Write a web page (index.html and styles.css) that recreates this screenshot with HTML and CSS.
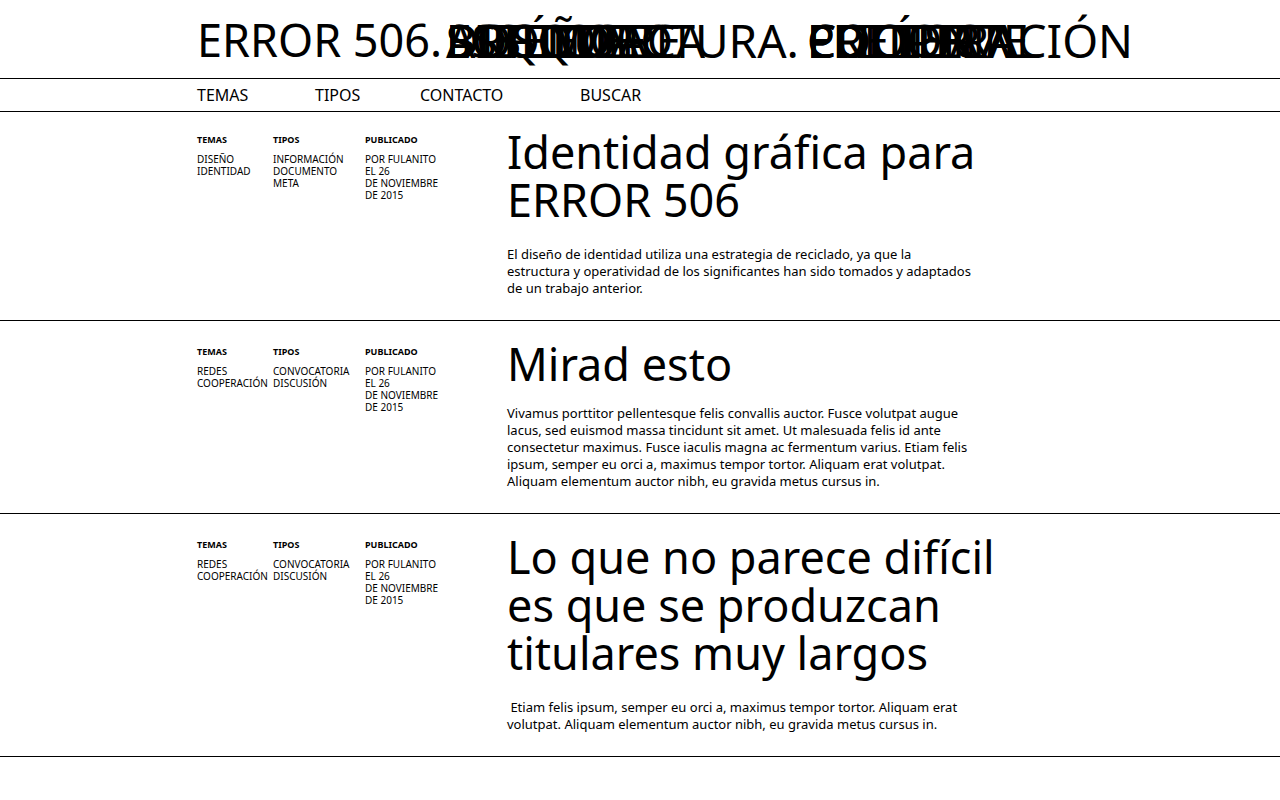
FILE: index.html
```html
<!DOCTYPE html>
<html lang="es">
<head>
<meta charset="utf-8">
<title>ERROR 506</title>
<meta name="viewport" content="width=device-width, initial-scale=1">
<link rel="stylesheet" href="styles.css">
</head>
<body>
<header class="masthead">
  <div class="wrap brand">
    <span class="brand-name">ERROR 506.</span>
    <span class="stack"><span>ARQUITECTURA.</span><span>DISEÑO</span><span>ESTÉTICA</span><span>BOSQUE</span><span>SOFTWARE</span><span>BIBLIOTECA</span><span>SOCIEDAD</span></span>
    <span class="stack"><span>COOPERACIÓN</span><span>POLÍTICA</span><span>EFICIENTE</span><span>CULTURA</span><span>EDITORIAL</span><span>PRENSA</span></span>
  </div>
</header>
<nav class="menu">
  <div class="wrap menu-items">
    <a href="#temas">TEMAS</a>
    <a href="#tipos">TIPOS</a>
    <a href="#contacto">CONTACTO</a>
    <a href="#buscar">BUSCAR</a>
  </div>
</nav>
<main>
  <article class="entry entry-first">
    <div class="wrap entry-grid">
      <div class="meta">
        <div><h2>TEMAS</h2><p>DISEÑO<br>IDENTIDAD</p></div>
        <div><h2>TIPOS</h2><p>INFORMACIÓN<br>DOCUMENTO<br>META</p></div>
        <div><h2>PUBLICADO</h2><p>POR FULANITO<br>EL 26<br>DE NOVIEMBRE<br>DE 2015</p></div>
      </div>
      <div class="content">
        <h1>Identidad gráfica para<br>ERROR 506</h1>
        <p>El diseño de identidad utiliza una estrategia de reciclado, ya que la<br>estructura y operatividad de los significantes han sido tomados y adaptados<br>de un trabajo anterior.</p>
      </div>
    </div>
  </article>
  <article class="entry">
    <div class="wrap entry-grid">
      <div class="meta">
        <div><h2>TEMAS</h2><p>REDES<br>COOPERACIÓN</p></div>
        <div><h2>TIPOS</h2><p>CONVOCATORIA<br>DISCUSIÓN</p></div>
        <div><h2>PUBLICADO</h2><p>POR FULANITO<br>EL 26<br>DE NOVIEMBRE<br>DE 2015</p></div>
      </div>
      <div class="content content-short">
        <h1>Mirad esto</h1>
        <p>Vivamus porttitor pellentesque felis convallis auctor. Fusce volutpat augue<br>lacus, sed euismod massa tincidunt sit amet. Ut malesuada felis id ante<br>consectetur maximus. Fusce iaculis magna ac fermentum varius. Etiam felis<br>ipsum, semper eu orci a, maximus tempor tortor. Aliquam erat volutpat.<br>Aliquam elementum auctor nibh, eu gravida metus cursus in.</p>
      </div>
    </div>
  </article>
  <article class="entry">
    <div class="wrap entry-grid">
      <div class="meta">
        <div><h2>TEMAS</h2><p>REDES<br>COOPERACIÓN</p></div>
        <div><h2>TIPOS</h2><p>CONVOCATORIA<br>DISCUSIÓN</p></div>
        <div><h2>PUBLICADO</h2><p>POR FULANITO<br>EL 26<br>DE NOVIEMBRE<br>DE 2015</p></div>
      </div>
      <div class="content">
        <h1>Lo que no parece difícil<br>es que se produzcan<br>titulares muy largos</h1>
        <p>&nbsp;Etiam felis ipsum, semper eu orci a, maximus tempor tortor. Aliquam erat<br>volutpat. Aliquam elementum auctor nibh, eu gravida metus cursus in.</p>
      </div>
    </div>
  </article>
</main>
</body>
</html>
```
FILE: styles.css
```css
* { box-sizing: border-box; }
body {
  margin: 0;
  background: #fff;
  color: #000;
  font-family: "Noto Sans", "Open Sans", sans-serif;
}
h1, h2, p { margin: 0; }
a { color: inherit; text-decoration: none; }
.wrap { width: 100%; max-width: 886px; margin: 0 auto; }

.masthead { border-bottom: 1px solid #000; padding: 16px 0 14px; }
.brand {
  display: grid;
  grid-template-columns: 249px 361px 1fr;
  font-size: 46px;
  line-height: 48px;
  white-space: nowrap;
}
.brand-name { font-size: 45px; }
/* All words of a stack share one cell and lie over each other */
.stack { display: grid; justify-items: start; }
.stack > span { grid-area: 1 / 1; }

.menu { border-bottom: 1px solid #000; padding: 4px 0; }
.menu-items {
  display: grid;
  grid-template-columns: 118px 105px 160px auto;
  justify-content: start;
  font-size: 16px;
  line-height: 24px;
}

.entry { border-bottom: 1px solid #000; padding: 19px 0 23px; }
.entry-first { padding-top: 16px; }
.entry-grid { display: grid; grid-template-columns: 310px 1fr; }
.meta {
  display: grid;
  grid-template-columns: 76px 92px auto;
  justify-content: start;
  align-content: start;
  padding-top: 6px;
  font-size: 10px;
  line-height: 12px;
  white-space: nowrap;
}
.meta h2 { font-size: 9px; font-weight: 700; margin-bottom: 7px; }
.content h1 {
  font-size: 45px;
  font-weight: 400;
  line-height: 48px;
  margin-bottom: 22px;
}
.content-short h1 { margin-bottom: 17px; }
.content p { font-size: 13px; line-height: 17px; }
```
